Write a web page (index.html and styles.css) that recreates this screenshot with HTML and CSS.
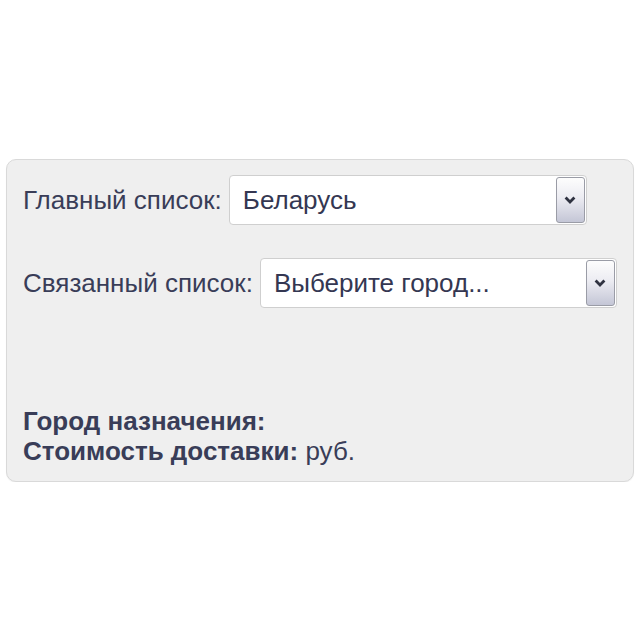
FILE: index.html
```html
<!DOCTYPE html>
<html lang="ru">
<head>
<meta charset="utf-8">
<title>Доставка</title>
<link rel="stylesheet" href="styles.css">
</head>
<body>
<div class="panel">
  <div class="row">
    <span class="label">Главный список:</span>
    <div class="select select-main">
      <span class="value">Беларусь</span>
      <span class="btn"><svg width="12" height="8" viewBox="0 0 12 8"><path d="M1.6 1.6 L6 6 L10.4 1.6" fill="none" stroke="#2f3240" stroke-width="2.8"/></svg></span>
    </div>
  </div>
  <div class="row row2">
    <span class="label">Связанный список:</span>
    <div class="select select-sub">
      <span class="value">Выберите город...</span>
      <span class="btn"><svg width="12" height="8" viewBox="0 0 12 8"><path d="M1.6 1.6 L6 6 L10.4 1.6" fill="none" stroke="#2f3240" stroke-width="2.8"/></svg></span>
    </div>
  </div>
  <div class="info">
    <div class="line"><b>Город назначения:</b></div>
    <div class="line"><b>Стоимость доставки:</b> руб.</div>
  </div>
</div>
</body>
</html>
```
FILE: styles.css
```css
html, body {
  margin: 0;
  padding: 0;
  background: #ffffff;
}
body {
  font-family: "Liberation Sans", Arial, sans-serif;
  color: #393d58;
}
.panel {
  margin: 159px 6px 0 6px;
  background: #efefef;
  border: 1px solid #d9d9d9;
  border-radius: 10px;
  padding: 15px 16px 15px 16px;
  box-shadow: 0 1px 1px rgba(0,0,0,0.05);
}
.row {
  display: flex;
  align-items: center;
  height: 50px;
}
.row2 {
  margin-top: 33px;
}
.label {
  font-size: 26px;
  margin-right: 7px;
  white-space: nowrap;
}
.select {
  box-sizing: border-box;
  height: 50px;
  background: #ffffff;
  border: 1px solid #cfcfcf;
  border-radius: 4px;
  display: flex;
  align-items: center;
  padding: 1px 1px 1px 13px;
}
.select-main { width: 358px; }
.select-sub { width: 357px; }
.value {
  flex: 1;
  font-size: 26px;
  color: #343752;
  white-space: nowrap;
}
.btn {
  box-sizing: border-box;
  width: 29px;
  height: 46px;
  border: 1px solid #9a9ca6;
  border-radius: 3px;
  background: linear-gradient(to bottom, #fdfdfd 0%, #ececf2 45%, #c4c6d6 100%);
  display: flex;
  align-items: center;
  justify-content: center;
}
.info {
  margin-top: 98px;
}
.line {
  font-size: 26px;
  line-height: 30px;
  white-space: nowrap;
}
.line b {
  font-weight: bold;
}
```
